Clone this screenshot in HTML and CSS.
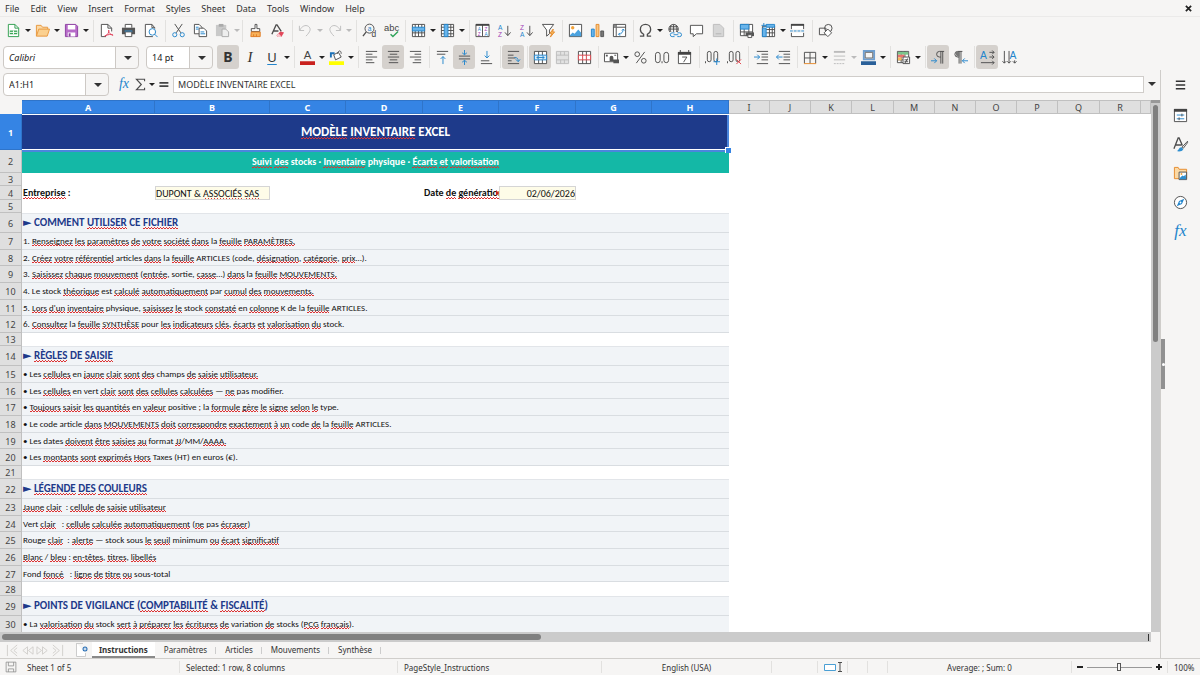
FILE: index.html
```html
<!DOCTYPE html>
<html lang="fr">
<head>
<meta charset="utf-8">
<meta name="viewport" content="width=device-width, initial-scale=1">
<title>Modèle inventaire</title>
<link rel="stylesheet" href="styles.css">
</head>
<body>
<div class="app">
<nav class="menubar">
  <button>File</button><button>Edit</button><button>View</button><button>Insert</button><button>Format</button><button>Styles</button><button>Sheet</button><button>Data</button><button>Tools</button><button>Window</button><button>Help</button>
  <button class="close" aria-label="Close"><svg viewBox="0 0 8 8" width="7" height="7"><path d="M1 1l6 6M7 1l-6 6" stroke="#222" stroke-width="2"/></svg></button>
</nav>

<div class="toolbar standard">
  <div class="group">
    <button aria-label="New"><svg viewBox="0 0 16 16"><path class="w" stroke="#2f9e4f" d="M2.500 1.500h7l4 4v9h-11z"/><path class="n" stroke="#2f9e4f" d="M9.500 1.500v4h4"/><path fill="#3aa757" d="M4 8h8v4H4z"/><path stroke="#fff" d="M4 10h8M8 8v4"/></svg></button><button class="more" aria-label="New options"></button>
    <button aria-label="Open"><svg viewBox="0 0 16 16"><path fill="#fbd9a5" stroke="#e8963c" d="M1.500 14V2.500h5l1.500 2h5.500V7"/><path fill="#fbd08f" stroke="#e8963c" d="M1.500 14L4 6.500h11.500L13 14z"/></svg></button><button class="more" aria-label="Open options"></button>
    <button aria-label="Save"><svg viewBox="0 0 16 16"><path fill="#b76bc9" stroke="#8b3fa0" d="M1.500 1.500h11l2 2v11h-13z"/><path fill="#fff" d="M4 2h8v5H4zM4 10h8v4.500H4z"/><path fill="#8b3fa0" d="M5 11h2v3.500H5z"/></svg></button><button class="more" aria-label="Save options"></button>
  </div>
  <div class="group">
    <button aria-label="Export as PDF"><svg viewBox="0 0 16 16"><path class="w k" d="M13.500 9V5.500l-4-4h-7v13h5"/><path class="k" d="M9.500 1.500v4h4"/><path class="n" stroke="#e0405a" d="M6 14c3-1 5-4 4.500-6.500C9.500 8 11 12.500 15 13c-2-1.500-5-1-9 1"/></svg></button>
    <button aria-label="Print"><svg viewBox="0 0 16 16"><path class="k w" d="M4.500 5V1.500h7V5"/><path fill="#555" d="M1 5h14v7H1z"/><path fill="#2f8fd0" d="M4 8h8v2H4z"/><path class="k w" d="M4.500 9.500h7v5h-7z"/></svg></button>
    <button aria-label="Print preview"><svg viewBox="0 0 16 16"><path class="k w" d="M12.500 6V5L9.500 1.500h-7v13h8"/><path class="k" d="M9.500 1.500V5h3"/><circle class="b" fill="#d7ecfa" cx="10" cy="9.500" r="3.500"/><path class="b" d="M12.500 12l3 3"/></svg></button>
  </div>
  <div class="group">
    <button aria-label="Cut"><svg viewBox="0 0 16 16"><path class="k" d="M4 1l6.500 9.500M12 1L5.500 10.500"/><circle class="b" cx="4" cy="12.500" r="2.200"/><circle class="b" cx="12" cy="12.500" r="2.200"/></svg></button>
    <button aria-label="Copy"><svg viewBox="0 0 16 16"><path class="k w" d="M1.500 1.500h5l3 3v7h-8z"/><path class="k w" d="M6.500 5.500h5l3 3v6h-8z"/><path class="b" d="M3 4.500h3M3 6.500h3M8 9.500h4M8 11.500h5"/></svg></button>
    <button aria-label="Paste" class="off"><svg viewBox="0 0 16 16"><path fill="#c9c9c9" d="M1 2h11v12H1z"/><path fill="#aaa" d="M4 1h5v3H4z"/><path fill="#eee" stroke="#aaa" d="M7.500 6.500h4l3 3v5h-7z"/></svg></button><button class="more off" aria-label="Paste options"></button>
  </div>
  <div class="group">
    <button aria-label="Clone formatting"><svg viewBox="0 0 16 16"><path class="k w" d="M7.500 1.500h2V6h3v3h-9V6h4z"/><path fill="#f7b25c" stroke="#e07a1f" d="M3.500 9.500h9.500v5h-10z"/><path stroke="#e07a1f" d="M6 12v2.500M9 12v2.500"/></svg></button>
    <button aria-label="Clear formatting"><svg viewBox="0 0 16 16"><path class="k s" d="M2 12L6.500 2h1L12 9M4 8.500h5"/><path fill="#e2475a" d="M7 13l4-4 4 1-3 5H8z"/><path fill="#f7c6cc" d="M7 13l2-2 3 3-.5 1H8z"/></svg></button>
  </div>
  <div class="group">
    <button aria-label="Undo"><svg viewBox="0 0 16 16"><path class="g" d="M1.500 3v5h5M2 7.500C4 3.500 8 1.500 11 3.500c3.500 2.500 2 6-2.500 10.500"/></svg></button><button class="more off" aria-label="Undo list"></button>
    <button aria-label="Redo"><svg viewBox="0 0 16 16"><path class="g" d="M14.500 3v5h-5M14 7.500C12 3.500 8 1.500 5 3.500c-3.500 2.500-2 6 2.500 10.500"/></svg></button><button class="more off" aria-label="Redo list"></button>
  </div>
  <div class="group">
    <button aria-label="Find and replace"><svg viewBox="0 0 16 16"><circle class="k" cx="8" cy="6" r="4.800"/><path class="k s" d="M4.500 9.500L1 14"/><text x="6" y="8" class="t blue" font-size="7">a</text><text x="10" y="15" class="t" font-size="9">d</text></svg></button>
    <button aria-label="Spelling"><svg viewBox="0 0 16 16"><text x="0" y="8" class="t" font-size="10">abc</text><path class="n" stroke="#2fa35a" stroke-width="1.500" d="M7 12l2.500 2.500L15 9"/></svg></button>
  </div>
  <div class="group">
    <button aria-label="Row"><svg viewBox="0 0 16 16"><path class="k w" d="M1.500 1.500h13v13h-13zM4.500 1.500v13M8 1.500v13M11.500 1.500v13M1.500 10.500h13"/><path fill="#69b4ea" stroke="#2385cc" d="M1.500 4.500h13v4h-13z"/></svg></button><button class="more" aria-label="Row options"></button>
    <button aria-label="Column"><svg viewBox="0 0 16 16"><path class="k w" d="M1.500 1.500h13v13h-13zM1.500 4.500h13M1.500 8h13M1.500 11.500h13M11.500 1.500v13"/><path fill="#69b4ea" stroke="#2385cc" d="M4.500 1.500h4v13h-4z"/></svg></button><button class="more" aria-label="Column options"></button>
  </div>
  <div class="group">
    <button aria-label="Sort"><svg viewBox="0 0 16 16"><path class="k w" d="M1 1.500h14v13H1zM8 2v12"/><path fill="#444" d="M1 1h14v2H1z"/><g font-size="5"><text x="3" y="8" class="t blue">A</text><text x="3" y="14" class="t vio">Z</text><text x="10" y="8" class="t vio">Z</text><text x="10" y="14" class="t blue">A</text></g></svg></button>
    <button aria-label="Sort ascending"><svg viewBox="0 0 16 16"><text x="1" y="7" class="t blue" font-size="7">A</text><text x="1" y="15" class="t vio" font-size="7">Z</text><path class="k" d="M11.500 3v10M8.500 10l3 3.500 3-3.500"/></svg></button>
    <button aria-label="Sort descending"><svg viewBox="0 0 16 16"><text x="1" y="7" class="t vio" font-size="7">Z</text><text x="1" y="15" class="t blue" font-size="7">A</text><path class="k" d="M11.500 3v10M8.500 10l3 3.500 3-3.500"/></svg></button>
    <button aria-label="AutoFilter"><svg viewBox="0 0 16 16"><path class="k w" d="M1.500 1.500h12L9 7.500v4l-3 2.500V7.500z"/><path fill="#f5b95f" stroke="#e58a2b" d="M13 6.500l-3.500 4.500h2l-1.500 4 4.500-5.500h-2z"/></svg></button>
  </div>
  <div class="group">
    <button aria-label="Image"><svg viewBox="0 0 16 16"><path class="k w" d="M1.500 1.500h13v13h-13z"/><circle cx="5" cy="5" r="1.800" fill="#f2a23a"/><path fill="#4ba3e0" d="M2 13l3-3 2 1.500L11 7l3 3.500V14H2z"/></svg></button>
    <button aria-label="Chart"><svg viewBox="0 0 16 16"><path fill="#69b4ea" stroke="#2385cc" d="M1.500 6.500h3v8h-3z"/><path fill="#f9c784" stroke="#e58a2b" d="M6.500 1.500h3v13h-3z"/><path fill="#777" stroke="#555" d="M11.500 8.500h3v6h-3z"/></svg></button>
    <button aria-label="Pivot table"><svg viewBox="0 0 16 16"><path class="k w" d="M1.500 1.500h13v13h-13zM1.500 4.500h13M4.500 1.500v13"/><path fill="#888" d="M2 2h3v3H2z"/><path class="b" d="M12 6.500c0 3-2 5.500-5 5.500M10.500 8L12 6.500 13.500 8M8.500 10.500L7 12l1.500 1.500"/></svg></button>
  </div>
  <div class="group tight">
    <button aria-label="Special character"><svg viewBox="0 0 16 16"><path class="k s" d="M2 14h4v-2C3.500 10.500 2.500 8.500 2.500 6.800 2.500 3.600 5 1.500 8 1.500s5.500 2.100 5.500 5.300c0 1.700-1 3.700-3.500 5.200v2h4"/></svg></button><button class="more" aria-label="Special character list"></button>
    <button aria-label="Hyperlink"><svg viewBox="0 0 16 16"><circle class="k" cx="7" cy="6.500" r="5"/><path class="k" d="M7 1.500v10M2 6.500h10M3 4h8M4.500 2.500c-1.500 3-1.500 5 0 8M9.500 2.500c1.500 3 1.500 5 0 8"/><path fill="#f6f5f4" d="M2.500 9.500h13V16h-13z"/><path class="b" d="M8 10.500H5.500a2 2 0 000 4H8M11 10.500h2.500a2 2 0 010 4H11M7 12.500h5"/></svg></button>
    <button aria-label="Comment"><svg viewBox="0 0 16 16"><path class="k w" d="M1.500 2.500h13v9H8l-3.500 3v-3h-3z"/></svg></button>
    <button aria-label="Headers and footers"><svg viewBox="0 0 16 16"><path fill="#d6d6d6" stroke="#bcbcbc" d="M2.500 1.500h7l4 4v9h-11z"/><path stroke="#b3b3b3" d="M5 11.500h6"/></svg></button>
  </div>
  <div class="group">
    <button aria-label="Print range"><svg viewBox="0 0 16 16"><path class="k w" d="M1.500 1.500h13v12h-13zM1.500 9.500h13M5.500 1.500v12M10.500 1.500v12"/><path fill="#69b4ea" stroke="#2385cc" d="M1.500 1.500h9v5h-9z"/><path fill="#555" d="M7 10h9v4H7z"/><path fill="#fff" stroke="#555" d="M9.500 12.500h4v3h-4z"/></svg></button>
    <button aria-label="Freeze"><svg viewBox="0 0 16 16"><path class="k w" d="M1.500 3.500h13v11h-13zM1.500 7h13M1.500 10.500h13M9 3.500v11M12 3.500v11"/><path fill="#69b4ea" stroke="#2385cc" d="M5.500 1.500h9v3h-9zM1.500 5.500h4v9h-4z"/><path class="b" d="M3 0v5M.5 2.500h5"/></svg></button><button class="more" aria-label="Freeze options"></button>
    <button aria-label="Split window"><svg viewBox="0 0 16 16"><path class="k w" d="M1.500 1.500h13v13h-13z"/><path fill="#444" d="M1 1h14v2H1z"/><path stroke="#f6f5f4" stroke-width="4" d="M0 8.500h16"/><path class="b" stroke-dasharray="3 1" d="M0 8.500h16"/></svg></button>
  </div>
  <div class="group">
    <button aria-label="Draw functions"><svg viewBox="0 0 16 16"><path class="k" d="M1.500 5.500h7v7h-7z"/><circle class="k" cx="11" cy="5.500" r="4"/><path class="k w" d="M10.500 6.500l4 4-4 4-4-4z"/></svg></button>
  </div>
</div>

<div class="toolbar format">
  <div class="combos">
    <label class="combo name"><select aria-label="Font name"><option>Calibri</option></select></label>
    <label class="combo size"><select aria-label="Font size"><option>14 pt</option></select></label>
  </div>
  <div class="group plain">
    <button class="on letter bold" aria-label="Bold">B</button>
    <button class="letter ital" aria-label="Italic">I</button>
    <button class="letter under" aria-label="Underline">U</button><button class="more" aria-label="Underline styles"></button>
  </div>
  <div class="group">
    <button aria-label="Font color"><svg viewBox="0 0 16 16"><text x="4" y="10" class="t" font-size="12">A</text><path fill="#c9211e" d="M0 12h16v4H0z"/></svg></button><button class="more" aria-label="Font colors"></button>
    <button aria-label="Highlight color"><svg viewBox="0 0 16 16"><path class="k w" d="M5 5l5-2.500 3 5-6 3z"/><path class="n" stroke="#1c71b8" stroke-width="2" d="M2 8V3.500h4"/><path class="k" d="M9 4c1-4 4-4 4 0"/><path fill="#ff0" d="M0 12h16v4H0z"/></svg></button><button class="more" aria-label="Highlight colors"></button>
  </div>
  <div class="group">
    <button aria-label="Align left"><svg viewBox="0 0 16 16"><path class="k" d="M2 1.500h12M2 4.500h7M2 7.500h12M2 10.500h7M2 13.500h9"/></svg></button>
    <button class="on" aria-label="Align center"><svg viewBox="0 0 16 16"><path class="k" d="M2 1.500h12M4 4.500h8M2 7.500h12M4 10.500h8M3 13.500h10"/></svg></button>
    <button aria-label="Align right"><svg viewBox="0 0 16 16"><path class="k" d="M2 1.500h12M7 4.500h7M2 7.500h12M7 10.500h7M5 13.500h9"/></svg></button>
  </div>
  <div class="group">
    <button aria-label="Align top"><svg viewBox="0 0 16 16"><path class="k" d="M2 1.500h12M2 4.500h9"/><path class="b" d="M8.500 15V7M6 9.500L8.500 7 11 9.500"/></svg></button>
    <button class="on" aria-label="Center vertically"><svg viewBox="0 0 16 16"><path class="k" d="M2 6.500h12M2 9.500h12"/><path class="b" d="M8 0v5M5.500 3L8 5l2.500-2M8 16v-5M5.500 13L8 11l2.500 2"/></svg></button>
    <button aria-label="Align bottom"><svg viewBox="0 0 16 16"><path class="k" d="M2 11.500h9M2 14.500h12"/><path class="b" d="M8.500 1v7.500M6 6l2.500 2.500L11 6"/></svg></button>
  </div>
  <div class="group">
    <button class="on" aria-label="Wrap text"><svg viewBox="0 0 16 16"><path class="k" d="M2 1.500h12M2 5.500h6M2 8.500h8M2 14.500h12M2 11.500h4"/><path class="b" d="M9 8c3 0 4 1 4 4M10.500 10l2.500 2.500L15 10"/></svg></button>
  </div>
  <div class="group">
    <button class="on" aria-label="Merge and center"><svg viewBox="0 0 16 16"><path class="k w" d="M1.500 1.500h13v13h-13zM6 1.500v13M10 1.500v13"/><path fill="#d7ecfa" stroke="#2385cc" d="M1.500 5.500h13v5h-13zM4 8h8M6 6.500L4 8l2 1.500M10 6.500L12 8l-2 1.500"/></svg></button>
    <button aria-label="Merge cells"><svg viewBox="0 0 16 16"><path fill="#e2e2e2" stroke="#bdbdbd" d="M1.500 1.500h13v13h-13zM6 1.500v4M10 1.500v4M1.500 5.500h13M1.500 10.500h13M6 10.500v4M10 10.500v4"/></svg></button>
    <button aria-label="Unmerge cells"><svg viewBox="0 0 16 16"><path class="k w" d="M1.500 1.500h13v13h-13zM6 1.500v13M10 1.500v13"/><path fill="#fff" stroke="#d8424a" d="M1.500 5.500h13v5h-13zM6 5.500v5M10 5.500v5"/></svg></button>
  </div>
  <div class="group">
    <button aria-label="Currency"><svg viewBox="0 0 16 16"><path class="k w" d="M.5 3.500h14v9H.5z"/><path fill="#555" d="M2 5h2v2H2zM11 5h2v1h-2zM6 8a2 2 0 114 0v4H6zM10 10h6v4h-6z"/></svg></button><button class="more" aria-label="Currency list"></button>
    <button aria-label="Percent"><svg viewBox="0 0 16 16"><circle class="k" cx="4.500" cy="4.500" r="2.500"/><circle class="k" cx="11.500" cy="11.500" r="2.500"/><path class="k" d="M12.500 2l-9 12"/></svg></button>
    <button aria-label="Number"><svg viewBox="0 0 16 16"><rect class="k" x=".5" y="2.500" width="5" height="11" rx="2.500"/><path fill="#4d4d4d" d="M7 12h1v2H7z"/><rect class="k" x="9.500" y="2.500" width="5" height="11" rx="2.500"/></svg></button>
    <button aria-label="Date"><svg viewBox="0 0 16 16"><path class="k w" d="M1.500 2.500h13v12h-13z"/><path fill="#444" d="M1 2h14v3H1zM3 0h1v2H3zM12 0h1v2h-1z"/><path class="k" d="M5.500 7.500h5L7 13"/></svg></button>
  </div>
  <div class="group">
    <button aria-label="Add decimal place"><svg viewBox="0 0 16 16"><path fill="#4d4d4d" d="M0 12h1v2H0z"/><rect class="k" x="2.500" y="1.500" width="4" height="11" rx="2"/><rect class="k" x="9.500" y="1.500" width="4" height="11" rx="2"/><path class="b" d="M9 12.500h7M12.500 9v7"/></svg></button>
    <button aria-label="Delete decimal place"><svg viewBox="0 0 16 16"><path fill="#4d4d4d" d="M0 12h1v2H0z"/><rect class="k" x="2.500" y="1.500" width="4" height="11" rx="2"/><rect class="k" x="9.500" y="1.500" width="4" height="11" rx="2"/><path stroke="#e0404a" d="M10 10l5 5M15 10l-5 5"/></svg></button>
  </div>
  <div class="group">
    <button aria-label="Increase indent"><svg viewBox="0 0 16 16"><path class="k" d="M3 1.500h12M8 4.500h7M8 7.500h7M8 10.500h7M3 14.500h12"/><path class="b" d="M0 7.500h6M3.500 5L6 7.500 3.500 10"/></svg></button>
    <button aria-label="Decrease indent"><svg viewBox="0 0 16 16"><path class="k" d="M3 1.500h12M8 4.500h7M8 7.500h7M8 10.500h7M3 14.500h12"/><path class="b" d="M.5 7.500H7M3 5L.5 7.500 3 10"/></svg></button>
  </div>
  <div class="group">
    <button aria-label="Borders"><svg viewBox="0 0 16 16"><path class="k" d="M1.500 14V2.500h12V14M1.500 8.500h12M7.500 2.500v12"/><path stroke="#e58a2b" d="M1 14.500h13"/></svg></button><button class="more" aria-label="Border list"></button>
    <button aria-label="Border style"><svg viewBox="0 0 16 16"><path stroke="#bbb" stroke-width="2" d="M2 2h12"/><path stroke="#bbb" d="M2 6.500h12M2 10.500h12"/><path stroke="#bbb" stroke-dasharray="2 1" d="M2 14.500h12"/></svg></button><button class="more off" aria-label="Border styles"></button>
    <button aria-label="Border color"><svg viewBox="0 0 16 16"><path fill="#f6f5f4" stroke="#6f9fd0" stroke-width="2" d="M3 1h11v9H3z"/><path class="n" stroke="#666" d="M4.500 2.500h8v6h-8z"/><path fill="#2a6099" d="M0 12h16v4H0z"/></svg></button><button class="more" aria-label="Border colors"></button>
  </div>
  <div class="group">
    <button aria-label="Conditional formatting"><svg viewBox="0 0 16 16"><path class="k w" d="M1.500 1.500h12v12h-12zM1.500 10.500h12M5.500 1.500v12M9.500 1.500v12"/><path fill="#7cc58b" d="M2 2h11v3H2z"/><path fill="#e8716f" d="M2 5h7v3H2z"/><path fill="#f5b95f" d="M2 8h4v3H2z"/><path class="k w" d="M7.500 7.500h7v7h-7zM9 10.500h4M9 12.500h4M12.500 9l-3 5"/></svg></button><button class="more" aria-label="Conditional list"></button>
  </div>
  <div class="group">
    <button class="on" aria-label="Left to right"><svg viewBox="0 0 16 16"><path class="k" d="M14 1.500H9a3 3 0 000 6h1.500M10.500 1.500v13M12.500 1.500v13"/><path class="b" d="M0 11.500h6M3.500 9L6 11.500 3.500 14"/></svg></button>
    <button aria-label="Right to left"><svg viewBox="0 0 16 16"><path class="k" d="M10 1.500H5a3 3 0 000 6h1.500M6.500 1.500v13M8.500 1.500v13"/><path fill="#777" d="M2 2h5v5H4z"/><path class="b" d="M10 11.500h6M12.500 9L10 11.500l2.500 2.500"/></svg></button>
  </div>
  <div class="group">
    <button class="on" aria-label="Horizontal text"><svg viewBox="0 0 16 16"><text x="0" y="10" class="t blue" font-size="11">A</text><path class="k" d="M10 2.500h5M10 7.500h5M1 13.500h14M13 .5l2 2-2 2M13 5.500l2 2-2 2M13 11.500l2 2-2 2"/></svg></button>
    <button aria-label="Vertical text"><svg viewBox="0 0 16 16"><text x="8" y="10" class="t blue" font-size="11">A</text><path class="k" d="M2.500 1v13M.5 12l2 2 2-2M7.500 1v13M5.500 12l2 2 2-2M13.500 11v3M11.500 12l2 2 2-2"/></svg></button>
  </div>
</div>

<div class="main">
  <div class="doc">
    <div class="formula">
      <label class="combo cell"><select aria-label="Name box"><option>A1:H1</option></select></label>
      <button aria-label="Function wizard" class="fx"><i>f</i>x</button>
      <button aria-label="Select function"><svg viewBox="0 0 16 16"><path class="k s" d="M13 4V1.500H3L9 8l-6 6.500h10V12"/></svg></button><button class="more" aria-label="Function list"></button>
      <button aria-label="Formula"><svg viewBox="0 0 16 16"><path stroke="#444" stroke-width="2" d="M3 6h11M3 10h11"/></svg></button>
      <input aria-label="Input line" value="MODÈLE INVENTAIRE EXCEL">
      <button class="more wide" aria-label="Expand formula bar"></button>
    </div>

    <div class="sheet">
      <div class="cells">
      <table>
        <colgroup><col class="c-head"><col class="c-a"><col class="c-b"><col class="c-n"><col class="c-w"><col class="c-n"><col class="c-w"><col class="c-n"><col class="c-w"><col class="c-s"><col class="c-s"><col class="c-s"><col class="c-m"><col class="c-s"><col class="c-s"><col class="c-s"><col class="c-s"><col class="c-m"><col class="c-s"><col></colgroup>
        <thead><tr><td></td><th class="sel">A</th><th class="sel">B</th><th class="sel">C</th><th class="sel">D</th><th class="sel">E</th><th class="sel">F</th><th class="sel">G</th><th class="sel">H</th><th>I</th><th>J</th><th>K</th><th>L</th><th>M</th><th>N</th><th>O</th><th>P</th><th>Q</th><th>R</th><th></th></tr></thead>
        <tbody>
        <tr class="r-title"><th class="sel">1</th><td colspan="8" class="title"><u>MODÈLE</u> <u>INVENTAIRE</u> EXCEL</td></tr>
        <tr class="r-sub"><th>2</th><td colspan="8" class="subtitle"><u>Suivi</u> <u>des</u> stocks · <u>Inventaire</u> physique · <u>Écarts</u> <u>et</u> <u>valorisation</u></td></tr>
        <tr class="r-gap"><th>3</th></tr>
        <tr class="r-info"><th>4</th><td class="strong"><u>Entreprise</u> :</td><td class="field">DUPONT &amp; <u>ASSOCIÉS</u> <u>SAS</u></td><td></td><td></td><td class="strong clip">Date <u>de</u> <u>génération</u> :</td><td class="field num">02/06/2026</td></tr>
        <tr class="r-gap"><th>5</th></tr>
        <tr class="r-head"><th>6</th><td colspan="8" class="head">► COMMENT <u>UTILISER</u> CE <u>FICHIER</u></td></tr>
        <tr class="r-17"><th>7</th><td colspan="8" class="line">1. <u>Renseignez</u> <u>les</u> <u>paramètres</u> <u>de</u> <u>votre</u> <u>société</u> <u>dans</u> la <u>feuille</u> <u>PARAMÈTRES.</u></td></tr>
        <tr class="r-16"><th>8</th><td colspan="8" class="line">2. <u>Créez</u> <u>votre</u> <u>référentiel</u> articles <u>dans</u> la <u>feuille</u> ARTICLES (code, <u>désignation</u>, <u>catégorie</u>, <u>prix</u>…).</td></tr>
        <tr class="r-17"><th>9</th><td colspan="8" class="line">3. <u>Saisissez</u> <u>chaque</u> <u>mouvement</u> (<u>entrée</u>, sortie, <u>casse</u>…) <u>dans</u> la <u>feuille</u> <u>MOUVEMENTS.</u></td></tr>
        <tr class="r-17"><th>10</th><td colspan="8" class="line">4. Le stock <u>théorique</u> est <u>calculé</u> <u>automatiquement</u> par <u>cumul</u> <u>des</u> <u>mouvements.</u></td></tr>
        <tr class="r-16"><th>11</th><td colspan="8" class="line">5. <u>Lors</u> <u>d'un</u> <u>inventaire</u> physique, <u>saisissez</u> <u>le</u> stock <u>constaté</u> en <u>colonne</u> K de la <u>feuille</u> ARTICLES.</td></tr>
        <tr class="r-17"><th>12</th><td colspan="8" class="line">6. <u>Consultez</u> la <u>feuille</u> <u>SYNTHÈSE</u> pour <u>les</u> <u>indicateurs</u> <u>clés</u>, <u>écarts</u> <u>et</u> <u>valorisation</u> <u>du</u> stock.</td></tr>
        <tr class="r-gap"><th>13</th></tr>
        <tr class="r-head"><th>14</th><td colspan="8" class="head">► <u>RÈGLES</u> DE <u>SAISIE</u></td></tr>
        <tr class="r-17"><th>15</th><td colspan="8" class="line">• Les <u>cellules</u> en <u>jaune</u> <u>clair</u> <u>sont</u> <u>des</u> champs <u>de</u> <u>saisie</u> <u>utilisateur.</u></td></tr>
        <tr class="r-16"><th>16</th><td colspan="8" class="line">• Les <u>cellules</u> en vert <u>clair</u> <u>sont</u> <u>des</u> <u>cellules</u> <u>calculées</u> — <u>ne</u> pas modifier.</td></tr>
        <tr class="r-17"><th>17</th><td colspan="8" class="line">• <u>Toujours</u> <u>saisir</u> <u>les</u> <u>quantités</u> en <u>valeur</u> positive ; la <u>formule</u> <u>gère</u> <u>le</u> <u>signe</u> <u>selon</u> <u>le</u> type.</td></tr>
        <tr class="r-17"><th>18</th><td colspan="8" class="line">• Le code article <u>dans</u> <u>MOUVEMENTS</u> <u>doit</u> <u>correspondre</u> <u>exactement</u> <u>à</u> <u>un</u> code <u>de</u> la <u>feuille</u> ARTICLES.</td></tr>
        <tr class="r-16"><th>19</th><td colspan="8" class="line">• Les dates <u>doivent</u> <u>être</u> <u>saisies</u> <u>au</u> format <u>JJ</u>/MM/<u>AAAA.</u></td></tr>
        <tr class="r-17"><th>20</th><td colspan="8" class="line">• Les <u>montants</u> <u>sont</u> <u>exprimés</u> <u>Hors</u> Taxes (HT) en euros (€).</td></tr>
        <tr class="r-gap"><th>21</th></tr>
        <tr class="r-head"><th>22</th><td colspan="8" class="head">► <u>LÉGENDE</u> <u>DES</u> <u>COULEURS</u></td></tr>
        <tr class="r-17"><th>23</th><td colspan="8" class="line"><u>Jaune</u> <u>clair</u>&nbsp; : <u>cellule</u> <u>de</u> <u>saisie</u> <u>utilisateur</u></td></tr>
        <tr class="r-16"><th>24</th><td colspan="8" class="line">Vert <u>clair</u>&nbsp;&nbsp; : <u>cellule</u> <u>calculée</u> <u>automatiquement</u> (<u>ne</u> pas <u>écraser</u>)</td></tr>
        <tr class="r-17"><th>25</th><td colspan="8" class="line">Rouge <u>clair</u>&nbsp; : <u>alerte</u> — stock sous <u>le</u> <u>seuil</u> minimum <u>ou</u> <u>écart</u> <u>significatif</u></td></tr>
        <tr class="r-17"><th>26</th><td colspan="8" class="line"><u>Blanc</u> / <u>bleu</u> : <u>en-têtes</u>, <u>titres</u>, <u>libellés</u></td></tr>
        <tr class="r-16"><th>27</th><td colspan="8" class="line">Fond <u>foncé</u>&nbsp;&nbsp; : <u>ligne</u> <u>de</u> <u>titre</u> <u>ou</u> sous-total</td></tr>
        <tr class="r-info"><th>28</th></tr>
        <tr class="r-head"><th>29</th><td colspan="8" class="head">► POINTS DE VIGILANCE (<u>COMPTABILITÉ</u> &amp; <u>FISCALITÉ</u>)</td></tr>
        <tr class="r-17"><th>30</th><td colspan="8" class="line">• La <u>valorisation</u> <u>du</u> stock <u>sert</u> <u>à</u> <u>préparer</u> <u>les</u> <u>écritures</u> <u>de</u> variation <u>de</u> stocks (<u>PCG</u> <u>français</u>).</td></tr>
        </tbody>
      </table>
      </div>
      <div class="vscroll"><div class="thumb"></div></div>
    </div>

    <div class="hscroll"><div class="thumb"></div><div class="grip"></div></div>

    <div class="tabs">
      <div class="tabnav">
        <button aria-label="First sheet"><svg viewBox="0 0 16 14"><path d="M2.500 1v12M13 1L6 7l7 6M13 4L9.500 7l3.500 3"/></svg></button><button aria-label="Previous sheet"><svg viewBox="0 0 16 14"><path d="M8 3L3 7l5 4zM14 3L9 7l5 4z"/></svg></button><button aria-label="Next sheet"><svg viewBox="0 0 16 14"><path d="M2 3l5 4-5 4zM8 3l5 4-5 4z"/></svg></button><button aria-label="Last sheet"><svg viewBox="0 0 16 14"><path d="M13.500 1v12M3 1l7 6-7 6M3 4l3.500 3L3 10"/></svg></button>
      </div>
      <button class="add" aria-label="Add sheet"><svg viewBox="0 0 14 14"><path fill="#fff" stroke="#ccc" d="M1.500 0v13.500h9V10M8 .5H1"/><circle cx="10" cy="6" r="2.500" fill="#2a6fb5"/><path stroke="#fff" d="M8.500 6h3M10 4.500v3"/></svg></button>
      <button class="tab current">Instructions</button><button class="tab">Paramètres</button><button class="tab">Articles</button><button class="tab">Mouvements</button><button class="tab">Synthèse</button>
    </div>
  </div>
  <button class="splitter" aria-label="Hide sidebar"></button>
  <aside class="sidebar">
    <button aria-label="Sidebar settings"><svg viewBox="0 0 16 16"><path stroke="#333" stroke-width="1.500" d="M3 4.500h10M3 8.500h10M3 12.500h10"/></svg></button>
    <button aria-label="Properties"><svg viewBox="0 0 16 16"><path class="k w" d="M1.500 1.500h13v13h-13z"/><path fill="#444" d="M1 1h14v3H1z"/><path class="b" d="M4 7.500h8M4 11.500h8"/><path class="k" d="M9.500 6v3M6.500 10v3"/></svg></button>
    <button aria-label="Styles"><svg viewBox="0 0 16 16"><path class="k s" d="M1 12.500L5.500 1h1l3.500 8M3 8.500h6"/><path class="k w" d="M15.500 4.500L9.500 11l1.500 1 4.500-6z"/><path fill="#2f8fd0" d="M4 15c2 0 2-4 5-4l2 2c-1 2-4 3-7 2z"/></svg></button>
    <button aria-label="Gallery"><svg viewBox="0 0 16 16"><path fill="#fbd9a5" stroke="#e58a2b" d="M1.500 13.500v-12h4l1 2h8v10z"/><path class="k w" d="M6.500 6.500h8v8h-8z"/><path fill="#2f8fd0" d="M7 13l3-3 1.500 1 2-2 .5 5H7z"/><circle cx="9" cy="8.500" r="1" fill="#f2a23a"/></svg></button>
    <button aria-label="Navigator"><svg viewBox="0 0 16 16"><circle class="k w" cx="8" cy="8" r="6.500"/><path fill="#2385cc" d="M12 4l-2.500 5.500L4 12l2.500-5.500z"/><circle cx="8" cy="8" r="1" fill="#fff"/></svg></button>
    <button aria-label="Functions" class="fx"><i>f</i>x</button>
  </aside>
</div>

<footer class="status">
  <span><svg class="disk" viewBox="0 0 16 16"><path class="n" stroke="#888" d="M1.500 1.500h13v13h-13zM4.500 1.500v5h7v-5M4.500 14.500v-4h7v4"/></svg></span>
  <span>Sheet 1 of 5</span>
  <span>Selected: 1 row, 8 columns</span>
  <span>PageStyle_Instructions</span>
  <span class="mid">English (USA)</span>
  <span></span>
  <span class="mode"><svg viewBox="0 0 18 12" width="18" height="12"><path fill="#fff" stroke="#4a9fd4" d="M.5 3.500h11v6H.5z"/><path class="k" d="M14 1.500h4M16 1.500v9M14 10.500h4"/></svg></span>
  <span></span>
  <span></span>
  <span class="mid">Average: ; Sum: 0</span>
  <span class="zoom"><button aria-label="Zoom out"><svg viewBox="0 0 8 8" width="8" height="8"><path stroke="#222" stroke-width="2" d="M1 4h6"/></svg></button><input type="range" aria-label="Zoom" min="0" max="100" value="49"><button aria-label="Zoom in"><svg viewBox="0 0 8 8" width="8" height="8"><path stroke="#222" stroke-width="2" d="M1 4h6M4 1v6"/></svg></button></span>
  <span>100%</span>
</footer>
</div>
</body>
</html>
```
FILE: styles.css
```css
* { box-sizing: border-box; }
body {
  margin: 0;
  background: #f6f5f4;
  color: #333;
  font-family: "Noto Sans", sans-serif;
  font-size: 9px;
}
button, input, select {
  margin: 0;
  padding: 0;
  border: 0;
  background: none;
  color: inherit;
  font: inherit;
}
.app { display: flex; flex-direction: column; height: 100vh; overflow: hidden; }

.menubar {
  display: flex;
  align-items: center;
  gap: 11px;
  height: 17px;
  padding: 0 5px;
  border-bottom: 1px solid #ebeae9;
}
.menubar .close { margin-left: auto; padding-right: 3px; display: flex; }

.toolbar { display: grid; align-items: center; }
.standard {
  height: 27px;
  grid-template-columns: 93px 72px 77px 50px 64px 49px 64px 93px 71px 100px 79px 1fr;
}
.format {
  height: 26px;
  grid-template-columns: 215px 79px 64px 71px 71px 27px 71px 101px 49px 49px 93px 35px 49px 1fr;
}
.group { display: flex; align-items: center; height: 22px; padding-left: 1px; border-left: 1px solid #e2e1df; }
.group:first-child, .group.plain { border-left-color: transparent; }
.group.tight { padding-left: 0; }
.toolbar button, .formula button {
  display: flex;
  align-items: center;
  justify-content: center;
  width: 22px;
  height: 24px;
  flex: none;
}
.toolbar svg, .sidebar svg { width: 15px; height: 15px; overflow: visible; }
.formula svg { width: 13px; height: 13px; }
.toolbar button.on { background: #d5d1cd; border-radius: 3px; }
.toolbar button.more, .formula button.more { width: 7px; }
.toolbar .letter { font-size: 14px; line-height: 20px; }
.toolbar .bold { font-weight: bold; }
.toolbar .ital { font: italic 15px "Liberation Serif", serif; }
.toolbar .under { font-size: 13px; text-decoration: underline #2385cc 1px; text-underline-offset: 2px; }
.more::before {
  content: "";
  border: 3px solid transparent;
  border-top-color: #222;
  border-bottom-width: 0;
}
.more.off::before { border-top-color: #bbb; }
.formula button.wide { width: 16px; }
.formula .wide::before, .combo::after { border: 4px solid transparent; border-top-color: #333; border-bottom-width: 0; }

svg .k { stroke: #4d4d4d; fill: none; }
svg .b { stroke: #2385cc; fill: none; }
svg .g { stroke: #bdbdbd; fill: none; }
svg .n { fill: none; }
svg .k.w, svg .w { fill: #fff; }
svg .s { stroke-width: 1.4px; }
svg .t { fill: #444; font-family: "Liberation Sans", sans-serif; }
svg .t.blue { fill: #2385cc; }
svg .t.vio { fill: #a23fb5; }

.combos { display: flex; gap: 7px; padding-left: 3px; }
.combo {
  display: flex;
  position: relative;
  height: 23px;
  border: 1px solid #cdc9c5;
  border-radius: 4px;
  background: linear-gradient(to left, #f6f5f4 22px, #cdc9c5 22px, #cdc9c5 23px, #fff 23px);
}
.combo select { appearance: none; width: 100%; padding-left: 5px; font-size: 9px; color: #222; }
.combo::after { content: ""; position: absolute; right: 6px; top: 9px; pointer-events: none; }
.combo.name { width: 136px; font-style: italic; }
.combo.size { width: 67px; }
.combo.cell { width: 106px; margin-right: 7px; }

.main { display: flex; flex: 1; min-height: 0; }
.doc { display: flex; flex-direction: column; flex: 1; min-width: 0; border-right: 1px solid #cfcdca; }
.formula { display: flex; align-items: center; height: 30px; padding: 0 0 2px 3px; }
.formula button { width: 16px; }
.formula input {
  flex: 1;
  min-width: 0;
  height: 17px;
  margin-left: 2px;
  padding: 0 4px;
  border: 1px solid #d0cdca;
  background: #fff;
}
.fx { font: italic 14px "Liberation Serif", serif; color: #2385cc; }

.sheet { display: flex; flex: 1; min-height: 0; background: #fff; }
.cells { flex: 1; min-width: 0; overflow: hidden; }
table { width: 100%; table-layout: fixed; border-collapse: separate; border-spacing: 0; }
.c-head { width: 22px; }
.c-a { width: 133px; }
.c-b { width: 115px; }
.c-n { width: 76px; }
.c-w { width: 77px; }
.c-s { width: 41px; }
.c-m { width: 42px; }
th {
  padding: 1px 0 0;
  background: #dfdfdf;
  color: #444;
  font-size: 9px;
  font-weight: normal;
  line-height: 11px;
  border: solid #c0c0c0;
  border-width: 0 1px 1px 0;
}
th.sel { background: #3584e4; color: #fff; font-weight: bold; border-color: #2f74c9; }
thead td { background: #f6f5f4; }
thead tr { height: 14px; }
thead th { border-top-width: 1px; line-height: 11px; }
tbody td {
  padding: 0 1px;
  overflow: hidden;
  white-space: nowrap;
  line-height: 12px;
  font-family: Carlito, Calibri, Lato, "DejaVu Sans", sans-serif;
  font-size: 9px;
  color: #111;
}
.r-title { height: 36px; }
.r-sub { height: 23px; }
.r-gap { height: 13px; }
.r-info { height: 14px; }
.r-head { height: 20px; }
.r-16 { height: 16px; }
.r-17 { height: 17px; }
td.title {
  position: relative;
  overflow: visible;
  background: #1e3a8a;
  border-top: 1px solid #fff;
  border-bottom: 1px solid #fff;
  color: #fff;
  font-size: 13px;
  line-height: 16px;
  font-weight: bold;
  text-align: center;
}
td.title::before {
  content: "";
  position: absolute;
  inset: 0 0 -3px 0;
  border: solid #4a86dc;
  border-width: 0 2px 2px 0;
}
td.title::after {
  content: "";
  position: absolute;
  right: -2px;
  bottom: -4px;
  width: 5px;
  height: 5px;
  background: #3584e4;
  border: solid #fff;
  border-width: 1px 0 0 1px;
}
td.subtitle { background: #14b8a6; color: #fff; font-size: 10px; font-weight: bold; text-align: center; }
td.strong { font-size: 10px; font-weight: bold; }
td.clip { position: relative; }
td.clip::after {
  content: "";
  position: absolute;
  right: 0;
  top: 4px;
  border: 3px solid transparent;
  border-left-color: #c9211e;
  border-right-width: 0;
}
td.field { background: #fefce8; border: 1px solid #d5d5d5; padding: 0; font-size: 10px; line-height: 11px; }
td.num { text-align: right; }
td.head, td.line { background: #f1f4f7; border-bottom: 1px solid #d9dde1; }
td.head { color: #1e3a8a; font-size: 11px; font-weight: bold; border-top: 1px solid #e2e5e9; }
u {
  text-decoration: none;
  background:
    repeating-linear-gradient(90deg, #d33 0 2px, transparent 2px 3px) 0 100% / 100% 1px no-repeat,
    repeating-linear-gradient(90deg, transparent 0 2px, #d33 2px 3px) 0 calc(100% - 1px) / 100% 1px no-repeat;
}

.vscroll { width: 9px; padding: 2px 2px 0; background: #cbcbcb; border-top: 3px solid #999; }
.vscroll .thumb { height: 45%; border-radius: 3px; background: #808080; }
.hscroll { display: flex; align-items: center; justify-content: space-between; height: 10px; margin-right: 9px; padding: 0 2px; background: #cbcbcb; }
.hscroll .thumb { width: 47%; height: 6px; border-radius: 3px; background: #808080; }
.hscroll .grip { width: 1px; height: 7px; background: #333; }

.tabs { display: flex; height: 16px; padding-left: 5px; font-size: 8px; }
.tabnav { display: flex; width: 62px; }
.tabnav button { display: flex; align-items: center; width: 15px; }
.tabnav svg { width: 15px; height: 13px; fill: none; stroke: #d0cecb; }
.add { display: flex; width: 25px; padding-left: 8px; align-items: center; }
.add svg { width: 14px; height: 14px; }
.tab { padding: 0 9px 1px; background: linear-gradient(#ccc, #ccc) 100% 50% / 1px 7px no-repeat; }
.tab.current { padding: 0 7px; background: #fff; border-bottom: 2px solid #8a8a8a; font-weight: bold; }

.splitter { align-self: center; width: 4px; height: 50px; background: #919191; position: relative; }
.splitter::after { content: ""; position: absolute; left: 1px; top: 24px; width: 3px; height: 3px; border-radius: 50%; background: #fff; }
.sidebar { display: flex; flex-direction: column; align-items: center; gap: 13px; width: 35px; padding: 6px 4px 0 0; }
.sidebar button { display: flex; align-items: center; justify-content: center; width: 22px; height: 16px; }
.sidebar button:first-child { margin-bottom: 2px; }
.sidebar .fx { font-size: 17px; }

.status {
  display: grid;
  grid-template-columns: 22px 157px 218px 204px 170px 46px 30px 20px 20px 184px 96px 1fr;
  align-items: center;
  height: 17px;
  border-top: 1px solid #d0cecb;
  font-size: 8px;
}
.status > span { display: flex; align-items: center; height: 12px; padding-left: 6px; border-left: 1px solid #e2e1df; }
.status > span:nth-child(-n+2) { border-left-color: transparent; padding-left: 4px; }
.status > .mid { justify-content: center; padding: 0; }
.status .disk { width: 12px; height: 12px; }
.status > .zoom { padding-left: 4px; }
.zoom button { display: flex; }
.zoom input { appearance: none; width: 65px; height: 10px; margin: 0 3px; background: linear-gradient(#999, #999) 0 50% / 100% 1px no-repeat; }
.zoom input::-webkit-slider-thumb { appearance: none; width: 4px; height: 8px; border: 1px solid #555; background: #f6f5f4; }
```
